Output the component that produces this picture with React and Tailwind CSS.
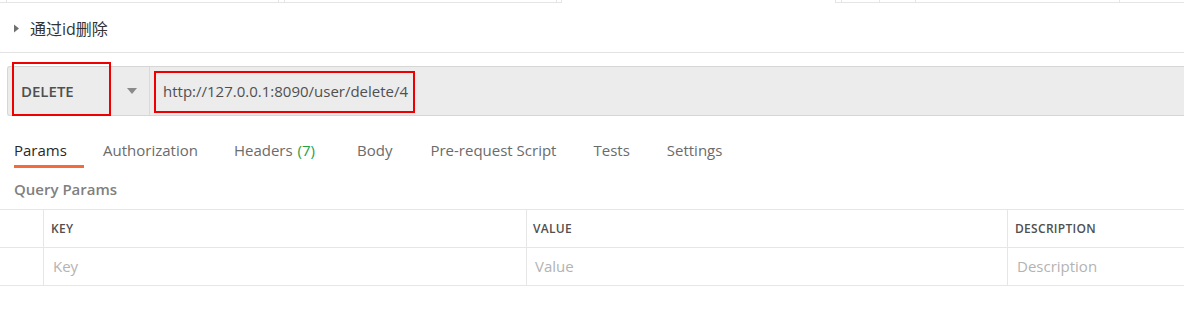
import React from "react";

const font = { fontFamily: '"Open Sans", "Noto Sans CJK SC", sans-serif' };

function TopStrip() {
  return (
    <div className="flex h-[3px] w-full">
      <div className="w-[7px] border-r border-b border-[#e5e5e5]" />
      <div className="w-[272px] border-r border-b border-[#e5e5e5]" />
      <div className="w-[6px] border-r border-b border-[#e5e5e5]" />
      <div className="w-[272px] border-r border-b border-[#e5e5e5]" />
      <div className="w-[5px] border-r border-b border-[#e5e5e5]" />
      <div className="w-[273px]" />
      <div className="w-[7px] border-l border-r border-b border-[#e5e5e5]" />
      <div className="w-[38px] border-r border-b border-[#e5e5e5]" />
      <div className="w-[36px] border-r border-b border-[#e5e5e5]" />
      <div className="w-[204px] border-r border-b border-[#e5e5e5]" />
      <div className="flex-1 border-b border-[#e5e5e5]" />
    </div>
  );
}

function Tab({ label, active, extra }) {
  return (
    <div
      className={
        "flex h-[38px] items-start pt-[10px] text-[15px] leading-[20px] " +
        (active ? "border-b-[3px] border-[#f26b3a] text-[#282828]" : "text-[#6b6b6b]")
      }
    >
      <span>{label}</span>
      {extra ? <span className="ml-[5px] text-[#26a146]">{extra}</span> : null}
    </div>
  );
}

export default function App() {
  return (
    <div className="w-[1184px] h-[327px] overflow-hidden bg-white" style={font}>
      <TopStrip />
      {/* header */}
      <div className="flex h-[50px] items-center border-b border-[#e3e3e3] pl-[13px] pt-[2px]">
        <svg width="7" height="9" viewBox="0 0 7 9" className="mr-[10px]">
          <path d="M1 0.5 L6 4.5 L1 8.5 Z" fill="#707070" />
        </svg>
        <span className="text-[16px] text-[#333333]">通过id删除</span>
      </div>

      {/* request bar */}
      <div className="relative mt-[13px] pl-[7px]">
        <div className="flex h-[50px] rounded-l-[3px] border border-r-0 border-[#d6d6d6] bg-[#ececec]">
          <div className="flex w-[142px] items-center border-r border-[#d9d9d9] pl-[13px] pr-[12px]">
            <span className="text-[15px] font-semibold text-[#505050]">DELETE</span>
            <svg width="10" height="6" viewBox="0 0 10 6" className="ml-auto">
              <path d="M0 0 L10 0 L5 6 Z" fill="#8a8a8a" />
            </svg>
          </div>
          <div className="flex items-center pl-[13px]">
            <span className="text-[15px] text-[#505050]">http://127.0.0.1:8090/user/delete/4</span>
          </div>
        </div>
        <div className="pointer-events-none absolute left-[12px] top-[-4px] h-[54px] w-[99px] border-2 border-[#ee0000]" />
        <div className="pointer-events-none absolute left-[154px] top-[5px] h-[42px] w-[261px] border-2 border-[#ee0000]" />
      </div>

      {/* tabs */}
      <div className="mt-[14px] flex">
        <div className="w-[84px] pl-[14px]">
          <Tab label="Params" active />
        </div>
        <div className="ml-[19px]">
          <Tab label="Authorization" />
        </div>
        <div className="ml-[36px]">
          <Tab label="Headers" extra="(7)" />
        </div>
        <div className="ml-[42px]">
          <Tab label="Body" />
        </div>
        <div className="ml-[38px]">
          <Tab label="Pre-request Script" />
        </div>
        <div className="ml-[37px]">
          <Tab label="Tests" />
        </div>
        <div className="ml-[37px]">
          <Tab label="Settings" />
        </div>
      </div>

      {/* query params */}
      <div className="mt-[11px] pl-[14px] text-[15px] font-semibold leading-[20px] text-[#808080]">
        Query Params
      </div>

      {/* table */}
      <div className="mt-[10px] border-t border-[#e6e6e6]">
        <div className="grid h-[38px] grid-cols-[44px_483px_481px_1fr] border-b border-[#e6e6e6]">
          <div className="border-r border-[#e6e6e6]" />
          <div className="flex items-center border-r border-[#e6e6e6] pl-[7px] text-[12px] font-semibold tracking-[0.3px] text-[#505050]">
            KEY
          </div>
          <div className="flex items-center border-r border-[#e6e6e6] pl-[6px] text-[12px] font-semibold tracking-[0.3px] text-[#505050]">
            VALUE
          </div>
          <div className="flex items-center pl-[7px] text-[12px] font-semibold tracking-[0.3px] text-[#505050]">
            DESCRIPTION
          </div>
        </div>
        <div className="grid h-[38px] grid-cols-[44px_483px_481px_1fr] border-b border-[#e6e6e6]">
          <div className="border-r border-[#e6e6e6]" />
          <div className="flex items-center border-r border-[#e6e6e6] pl-[9px] text-[15px] text-[#b3b3b3]">
            Key
          </div>
          <div className="flex items-center border-r border-[#e6e6e6] pl-[8px] text-[15px] text-[#b3b3b3]">
            Value
          </div>
          <div className="flex items-center pl-[9px] text-[15px] text-[#b3b3b3]">Description</div>
        </div>
      </div>
    </div>
  );
}
